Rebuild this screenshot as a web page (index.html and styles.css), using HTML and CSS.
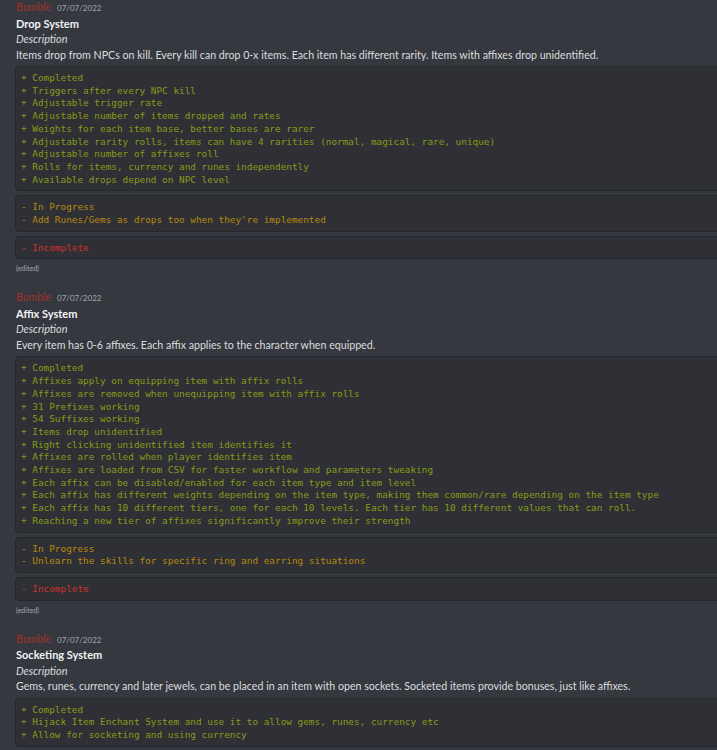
FILE: index.html
```html
<!DOCTYPE html>
<html>
<head>
<meta charset="utf-8">
<link rel="stylesheet" href="styles.css">
</head>
<body>
<div class="feed">
  <div class="message">
    <div class="meta"><span class="user">Bumble</span><span class="date">07/07/2022</span></div>
    <div class="title">Drop System</div>
    <div class="sub">Description</div>
    <div class="text">Items drop from NPCs on kill. Every kill can drop 0-x items. Each item has different rarity. Items with affixes drop unidentified.</div>
    <pre class="code add">+ Completed
+ Triggers after every NPC kill
+ Adjustable trigger rate
+ Adjustable number of items dropped and rates
+ Weights for each item base, better bases are rarer
+ Adjustable rarity rolls, items can have 4 rarities (normal, magical, rare, unique)
+ Adjustable number of affixes roll
+ Rolls for items, currency and runes independently
+ Available drops depend on NPC level</pre>
    <pre class="code prog">- In Progress
- Add Runes/Gems as drops too when they're implemented</pre>
    <pre class="code del">- Incomplete</pre>
    <div class="edited">(edited)</div>
  </div>

  <div class="message">
    <div class="meta"><span class="user">Bumble</span><span class="date">07/07/2022</span></div>
    <div class="title">Affix System</div>
    <div class="sub">Description</div>
    <div class="text">Every item has 0-6 affixes. Each affix applies to the character when equipped.</div>
    <pre class="code add">+ Completed
+ Affixes apply on equipping item with affix rolls
+ Affixes are removed when unequipping item with affix rolls
+ 31 Prefixes working
+ 54 Suffixes working
+ Items drop unidentified
+ Right clicking unidentified item identifies it
+ Affixes are rolled when player identifies item
+ Affixes are loaded from CSV for faster workflow and parameters tweaking
+ Each affix can be disabled/enabled for each item type and item level
+ Each affix has different weights depending on the item type, making them common/rare depending on the item type
+ Each affix has 10 different tiers, one for each 10 levels. Each tier has 10 different values that can roll.
+ Reaching a new tier of affixes significantly improve their strength</pre>
    <pre class="code prog">- In Progress
- Unlearn the skills for specific ring and earring situations</pre>
    <pre class="code del">- Incomplete</pre>
    <div class="edited">(edited)</div>
  </div>

  <div class="message">
    <div class="meta"><span class="user">Bumble</span><span class="date">07/07/2022</span></div>
    <div class="title">Socketing System</div>
    <div class="sub">Description</div>
    <div class="text">Gems, runes, currency and later jewels, can be placed in an item with open sockets. Socketed items provide bonuses, just like affixes.</div>
    <pre class="code add">+ Completed
+ Hijack Item Enchant System and use it to allow gems, runes, currency etc
+ Allow for socketing and using currency</pre>
  </div>
</div>
</body>
</html>
```

FILE: styles.css
```css
html, body {
  margin: 0;
  padding: 0;
  background: #35383e;
  overflow: hidden;
}

.feed {
  display: flex;
  flex-direction: column;
  gap: 16px;
  padding-top: 0;
  font-family: Lato, "Noto Sans", sans-serif;
  color: #dcddde;
}

.message {
  padding-left: 16px;
  display: flex;
  flex-direction: column;
}

.meta {
  display: flex;
  align-items: baseline;
  gap: 6px;
  line-height: 15.5px;
  height: 15.5px;
}

.user {
  color: #a3302a;
  font-size: 10.5px;
}

.date {
  color: #a3a6aa;
  font-size: 8px;
}

.title {
  font-weight: 700;
  font-size: 11px;
  line-height: 15.5px;
  color: #f2f3f5;
}

.sub {
  font-style: italic;
  font-size: 10.8px;
  line-height: 15.5px;
}

.text {
  font-size: 10.65px;
  line-height: 15.5px;
  white-space: nowrap;
}

.code {
  margin: 4px 0 0 -1px;
  width: 720px;
  box-sizing: border-box;
  padding: 5px 5px 4px;
  background: #2e3035;
  border: 1px solid #25272b;
  border-radius: 4px;
  font-family: "DejaVu Sans Mono", "Liberation Mono", monospace;
  font-size: 9.4px;
  line-height: 12.7px;
  white-space: pre;
}

.add { color: #889b18; }
.prog { color: #b8880c; }
.del { color: #d0302c; }

.edited {
  font-size: 7px;
  line-height: 12px;
  margin-top: 3px;
  color: #a3a6aa;
}
```
